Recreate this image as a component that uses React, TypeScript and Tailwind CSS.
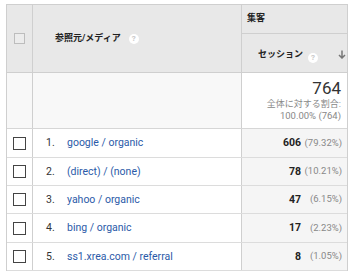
import React from "react";

const rows = [
  { n: "1.", label: "google / organic", v: "606", p: "(79.32%)", h: "h-[29px]" },
  { n: "2.", label: "(direct) / (none)", v: "78", p: "(10.21%)", h: "h-[28px]" },
  { n: "3.", label: "yahoo / organic", v: "47", p: "(6.15%)", h: "h-[28px]" },
  { n: "4.", label: "bing / organic", v: "17", p: "(2.23%)", h: "h-[29px]" },
  { n: "5.", label: "ss1.xrea.com / referral", v: "8", p: "(1.05%)", h: "h-[28px]" },
];

function Help() {
  return (
    <span className="inline-flex items-center justify-center w-[10px] h-[10px] rounded-full bg-white text-[8px] leading-none font-bold text-[#c8c8c8]">
      ?
    </span>
  );
}

export default function App() {
  return (
    <div
      className="w-[354px] h-[271px] bg-white overflow-hidden pt-[4px] pl-[6px]"
      style={{ fontFamily: 'Roboto, "Noto Sans CJK JP", sans-serif' }}
    >
      <div className="w-[342px] border-t border-l border-r border-[#cfcfcf]">
        {/* header */}
        <div className="flex h-[68px] border-b border-[#cfcfcf] bg-[#e8e8e8]">
          <div className="w-[26px] border-r border-[#cfcfcf] flex items-center justify-center">
            <div className="w-[11px] h-[11px] border border-[#bdbdbd] bg-[#ececec]" />
          </div>
          <div className="w-[209px] border-r border-[#cfcfcf] flex items-center pl-[22px] gap-[8px]">
            <span className="text-[9px] font-bold text-[#222]">参照元/メディア</span>
            <Help />
          </div>
          <div className="flex-1 flex flex-col">
            <div className="h-[29px] border-b border-[#cfcfcf] flex items-center pl-[5px]">
              <span className="text-[9px] font-bold text-[#222]">集客</span>
            </div>
            <div className="flex-1 flex items-center pl-[16px] pt-[3px]">
              <span className="text-[9px] font-bold text-[#222]">セッション</span>
              <span className="ml-[5px]">
                <Help />
              </span>
              <svg className="ml-[20px]" width="8" height="9" viewBox="0 0 8 9">
                <path d="M4 0.5V8M1 5l3 3 3-3" stroke="#777" strokeWidth="1.5" fill="none" />
              </svg>
            </div>
          </div>
        </div>
        {/* totals */}
        <div className="flex h-[56px] border-b border-[#d6d6d6]">
          <div className="w-[26px] border-r border-[#cfcfcf] bg-[#f8f8f8]" />
          <div className="w-[209px] border-r border-[#cfcfcf] bg-[#f8f8f8]" />
          <div className="flex-1 bg-white flex flex-col items-end pr-[6px] pt-[7px]">
            <span className="text-[17px] leading-[17px] text-[#333]">764</span>
            <span className="text-[9px] leading-[12px] text-[#888] mt-[1px]">全体に対する割合:</span>
            <span className="text-[9.5px] leading-[12px] text-[#888]">100.00% (764)</span>
          </div>
        </div>
        {/* rows */}
        {rows.map((r) => (
          <div key={r.n} className={`flex ${r.h} border-b border-[#dcdcdc]`}>
            <div className="w-[26px] border-r border-[#cfcfcf] flex items-center justify-center">
              <div className="w-[13px] h-[13px] border border-[#444] bg-white" />
            </div>
            <div className="w-[209px] border-r border-[#cfcfcf] flex items-center pl-[13px] text-[10.5px]">
              <span className="w-[21px] text-[#333]">{r.n}</span>
              <span className="text-[#2b5aa8]">{r.label}</span>
            </div>
            <div className="flex-1 bg-[#f5f5f5] flex items-center justify-end pr-[5px]">
              <span className="text-[10.5px] font-bold text-[#222]">{r.v}</span>
              <span className="w-[41px] text-right text-[9.5px] text-[#888]">{r.p}</span>
            </div>
          </div>
        ))}
      </div>
    </div>
  );
}
